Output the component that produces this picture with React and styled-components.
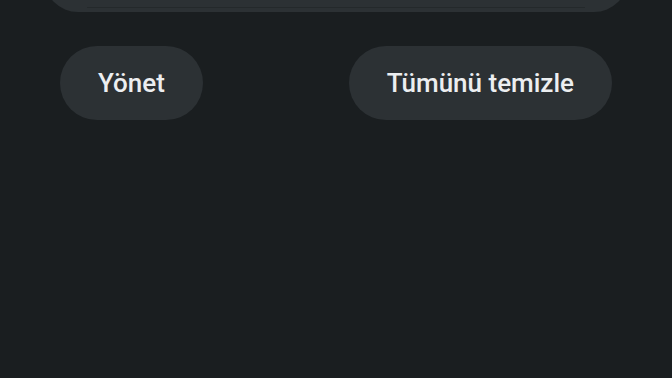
import React from 'react';
import styled, { createGlobalStyle } from 'styled-components';

const GlobalStyle = createGlobalStyle`
  html, body {
    margin: 0;
    padding: 0;
    background: #1a1e20;
  }
  body {
    font-family: Roboto, "Liberation Sans", sans-serif;
  }
`;

const App = () => {
  return (
    <Page>
      <GlobalStyle />
      {/* notification card, mostly scrolled out of view */}
      <Card>
        <Divider />
      </Card>
      <Actions>
        <Pill>Yönet</Pill>
        <Pill>Tümünü temizle</Pill>
      </Actions>
    </Page>
  );
};

const Page = styled.div`
  width: 672px;
  height: 378px;
  overflow: hidden;
  background: #1a1e20;
  display: flex;
  flex-direction: column;
  align-items: center;
`;

const Card = styled.div`
  width: 584px;
  height: 60px;
  margin-top: -48px;
  background: #2c3134;
  border-radius: 0 0 34px 34px;
  display: flex;
  flex-direction: column;
  justify-content: flex-end;
  align-items: center;
  padding-bottom: 4px;
  box-sizing: border-box;
`;

const Divider = styled.div`
  width: 498px;
  height: 1px;
  background: #24292b;
`;

const Actions = styled.div`
  width: 552px;
  margin-top: 34px;
  display: flex;
  justify-content: space-between;
`;

const Pill = styled.button`
  height: 74px;
  padding: 0 38px;
  border: none;
  border-radius: 37px;
  background: #2c3134;
  color: #eceef0;
  font-family: Roboto, "Liberation Sans", sans-serif;
  font-size: 26px;
  font-weight: 500;
  cursor: pointer;
`;

export default App;
